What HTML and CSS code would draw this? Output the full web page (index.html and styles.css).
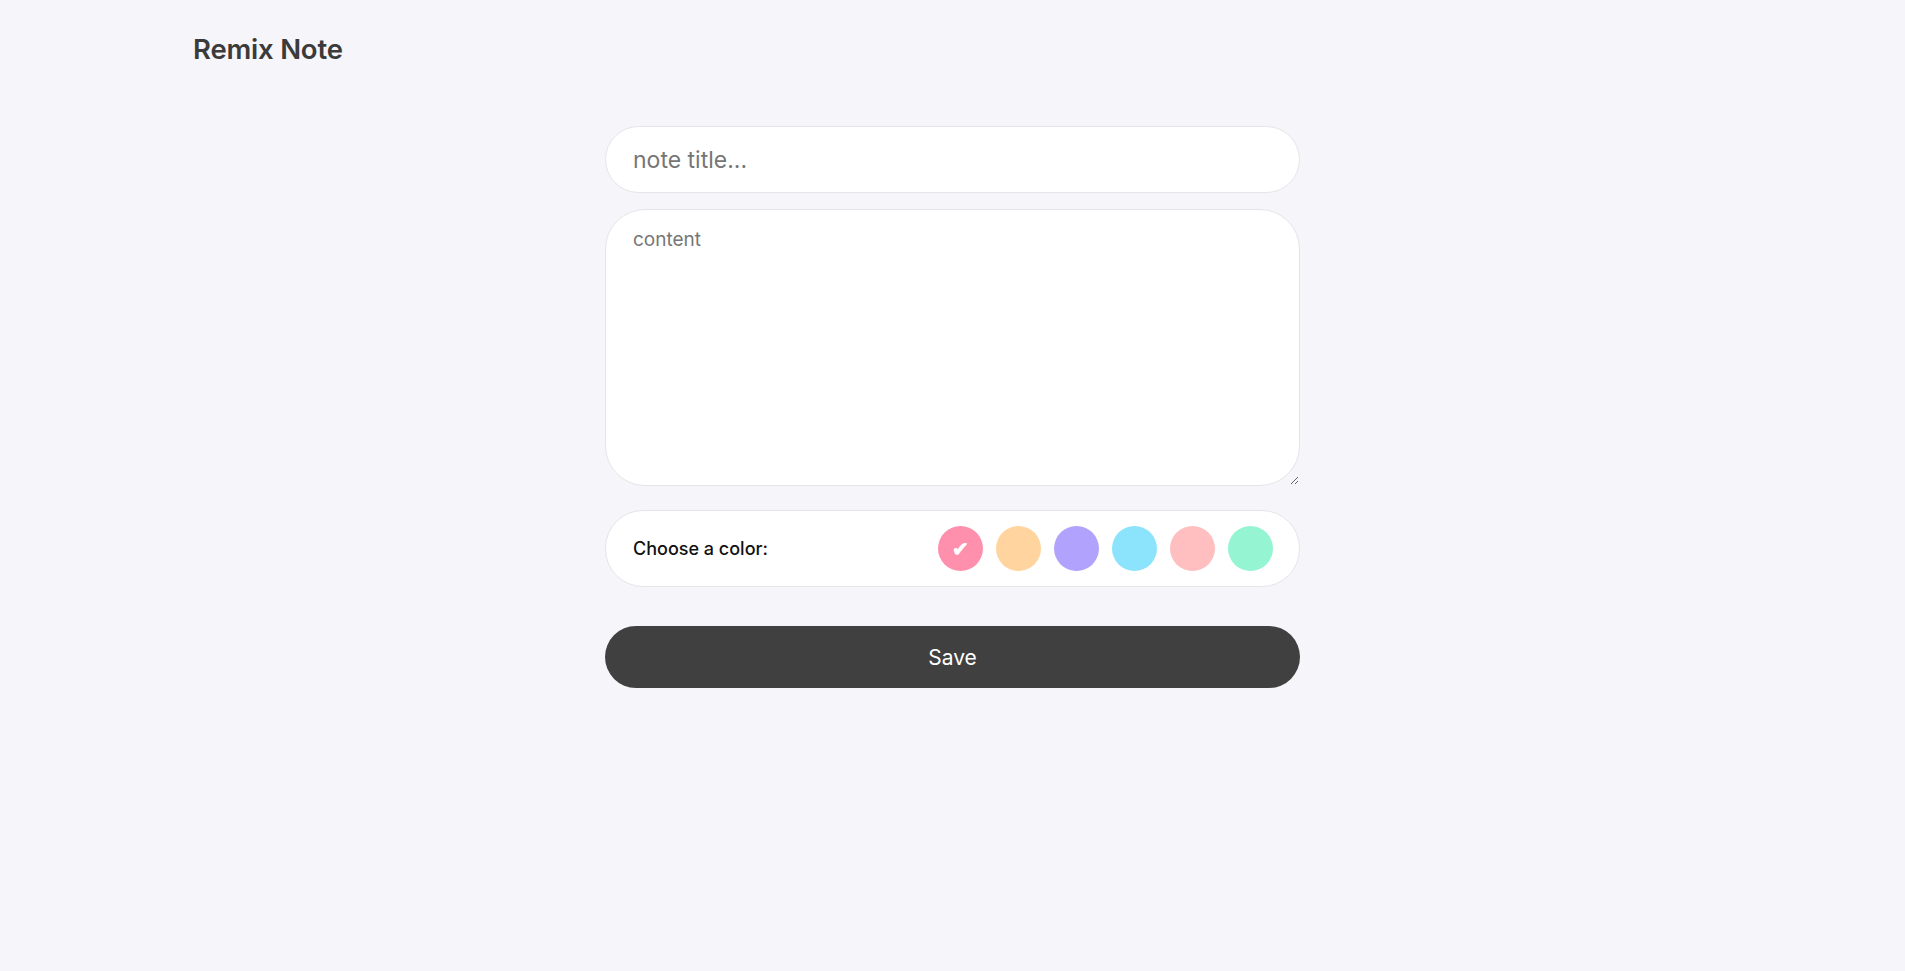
FILE: index.html
```html
<!DOCTYPE html>
<html lang="en">
<head>
<meta charset="utf-8">
<title>Remix Note</title>
<link rel="stylesheet" href="styles.css">
</head>
<body>
<header class="header">
  <h1 class="brand">Remix Note</h1>
</header>
<main class="main">
  <form class="note-form">
    <input class="title-input" type="text" placeholder="note title...">
    <textarea class="content-input" placeholder="content"></textarea>
    <div class="color-bar">
      <span class="color-label">Choose a color:</span>
      <div class="swatches">
        <span class="swatch swatch-pink selected">✔</span>
        <span class="swatch swatch-orange"></span>
        <span class="swatch swatch-purple"></span>
        <span class="swatch swatch-cyan"></span>
        <span class="swatch swatch-rose"></span>
        <span class="swatch swatch-mint"></span>
      </div>
    </div>
    <button class="save-btn" type="button">Save</button>
  </form>
</main>
</body>
</html>
```
FILE: styles.css
```css
* { box-sizing: border-box; }
html, body { margin: 0; padding: 0; }
body {
  background: #f6f6fa;
  font-family: "Inter", "Noto Sans", sans-serif;
  color: #3a3a3a;
  min-height: 100vh;
}
.header {
  width: 1519px;
  margin: 0 auto;
  padding-top: 31px;
}
.brand {
  margin: 0;
  font-size: 27.5px;
  font-weight: 600;
  letter-spacing: -0.2px;
  line-height: 36px;
  color: #3b3b3b;
}
.main {
  display: flex;
  justify-content: center;
  padding-top: 59px;
}
.note-form {
  width: 695px;
  display: flex;
  flex-direction: column;
}
.title-input {
  height: 67px;
  border: 1px solid #e4e4ea;
  border-radius: 34px;
  background: #fff;
  padding: 0 27px;
  font-family: inherit;
  font-size: 23px;
  color: #333;
  outline: none;
}
.title-input::placeholder { color: #767676; }
.content-input {
  margin-top: 16px;
  height: 277px;
  border: 1px solid #e4e4ea;
  border-radius: 40px;
  background: #fff;
  padding: 18px 27px;
  font-family: inherit;
  font-size: 19px;
  color: #333;
  outline: none;
  resize: vertical;
}
.content-input::placeholder { color: #767676; }
.color-bar {
  margin-top: 24px;
  height: 77px;
  border: 1px solid #e4e4ea;
  border-radius: 38px;
  background: #fff;
  display: flex;
  align-items: center;
  justify-content: space-between;
  padding: 0 26px 0 27px;
}
.color-label {
  font-size: 18px;
  font-weight: 500;
  color: #111;
}
.swatches {
  display: flex;
  gap: 13px;
}
.swatch {
  width: 45px;
  height: 45px;
  border-radius: 50%;
  display: flex;
  align-items: center;
  justify-content: center;
  color: #fff;
  font-size: 20px;
  font-weight: 700;
}
.swatch-pink { background: #ff90ad; }
.swatch-orange { background: #ffd49f; }
.swatch-purple { background: #b1a2fd; }
.swatch-cyan { background: #8be4fc; }
.swatch-rose { background: #ffbebf; }
.swatch-mint { background: #95f5d2; }
.save-btn {
  margin-top: 39px;
  height: 62px;
  border: none;
  border-radius: 31px;
  background: #404040;
  color: #fff;
  font-family: inherit;
  font-size: 21px;
  font-weight: 400;
  cursor: pointer;
}
```
